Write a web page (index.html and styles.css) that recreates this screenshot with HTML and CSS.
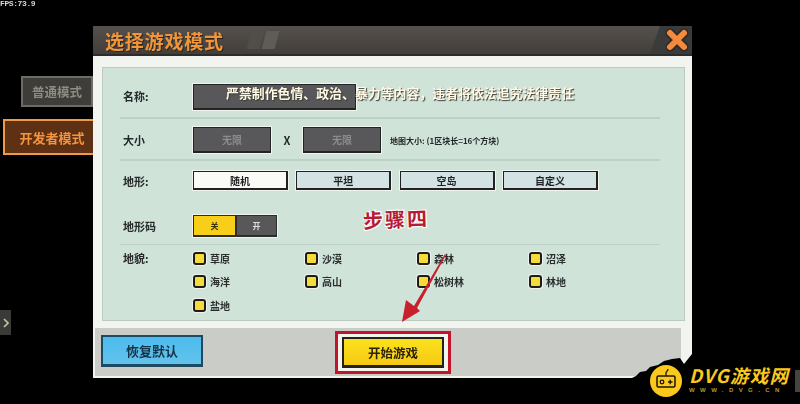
FILE: index.html
```html
<!doctype html>
<html>
<head>
<meta charset="utf-8">
<title>选择游戏模式</title>
<link rel="stylesheet" href="styles.css">
</head>

<body>
<div class="fps">FPS:73.9</div>

<div class="screen">
	<!--左侧模式-->
	<div class="side">
		<div class="tab tab-normal">普通模式</div>
		<div class="tab tab-dev">开发者模式</div>
		<div class="handle"><svg width="6" height="10" viewBox="0 0 6 10"><path d="M1 1l4 4-4 4" fill="none" stroke="#c9c2a8" stroke-width="1.6"/></svg></div>
	</div>

	<!--弹窗-->
	<div class="dialog">
		<div class="head">
			<div class="title">选择游戏模式</div>
			<div class="deco"><i></i><i></i></div>
			<div class="close">
				<svg width="24" height="24" viewBox="0 0 24 24">
					<path d="M5 5l14 14M19 5L5 19" stroke="#2d2a28" stroke-width="9" stroke-linecap="round"/>
					<path d="M5 5l14 14M19 5L5 19" stroke="#f58a3c" stroke-width="6" stroke-linecap="round"/>
				</svg>
			</div>
		</div>

		<div class="panel">
			<div class="row row-name">
				<div class="label">名称:</div>
				<div class="field field-name"></div>
			</div>
			<div class="row row-size">
				<div class="label">大小</div>
				<div class="field">无限</div>
				<div class="times">X</div>
				<div class="field">无限</div>
				<div class="hint">地图大小: (1区块长=16个方块)</div>
			</div>
			<div class="row row-terrain">
				<div class="label">地形:</div>
				<div class="opts">
					<div class="opt on">随机</div>
					<div class="opt">平坦</div>
					<div class="opt">空岛</div>
					<div class="opt">自定义</div>
				</div>
			</div>
			<div class="row row-code">
				<div class="label">地形码</div>
				<div class="toggle">
					<div class="tg-off">关</div>
					<div class="tg-on">开</div>
				</div>
			</div>
			<div class="row row-biome">
				<div class="label">地貌:</div>
				<div class="biomes">
					<div class="biome"><span class="check"></span>草原</div>
					<div class="biome"><span class="check"></span>沙漠</div>
					<div class="biome"><span class="check"></span>森林</div>
					<div class="biome"><span class="check"></span>沼泽</div>
					<div class="biome"><span class="check"></span>海洋</div>
					<div class="biome"><span class="check"></span>高山</div>
					<div class="biome"><span class="check"></span>松树林</div>
					<div class="biome"><span class="check"></span>林地</div>
					<div class="biome"><span class="check"></span>盐地</div>
				</div>
			</div>
		</div>

		<div class="foot">
			<div class="btn-reset">恢复默认</div>
			<div class="btn-start-wrap">
				<div class="btn-start">开始游戏</div>
			</div>
		</div>
	</div>
</div>

<!--盖在上面的标注-->
<div class="warn">严禁制作色情、政治、暴力等内容，违者将依法追究法律责任</div>
<div class="step">步骤四</div>
<svg class="arrow" width="60" height="80" viewBox="0 0 60 80">
	<path d="M46 8L15 60 7 54 3 76 21 65 18 62 47 9z" fill="#c8202c"/>
</svg>

<!--水印-->
<svg class="tear" width="70" height="54" viewBox="0 0 70 54"><path d="M4 28L8 26 12 22 18 21 22 17 30 15 36 11 44 9 52 8 56 14 60 9 64 4 70 4 70 54 4 54z" fill="#000"/></svg>
<div class="corner"></div>
<div class="logo">
	<svg class="logo-icon" width="32" height="32" viewBox="0 0 32 32">
		<circle cx="16" cy="16" r="16" fill="#fbc81e"/>
		<path d="M16 11V8c0-1.500 2-1.500 2-4" fill="none" stroke="#1c1605" stroke-width="1.300"/>
		<rect x="7" y="11" width="18" height="11" rx="1.500" fill="none" stroke="#1c1605" stroke-width="1.500"/>
		<circle cx="12" cy="17" r="1.800" fill="none" stroke="#1c1605" stroke-width="1.300"/>
		<path d="M18 17h4.500M20.200 14.800v4.500" stroke="#1c1605" stroke-width="1.300"/>
	</svg>
	<div class="logo-text">
		<div class="logo-name">DVG游戏网</div>
		<div class="logo-url">WWW.DVG.CN</div>
	</div>
</div>
</body>
</html>
```
FILE: styles.css
```css
* {
	box-sizing: border-box;
}
html, body {
	margin: 0;
	height: 100%;
	overflow: hidden;
	background: #000;
	font-family: "Noto Sans CJK SC", "Liberation Sans", sans-serif;
}
body {
	position: relative;
	width: 800px;
	height: 404px;
}

.fps {
	position: absolute;
	left: 0;
	top: -1px;
	color: #d8d8d8;
	font: bold 8px/9px "Liberation Mono", monospace;
	letter-spacing: -.4px;
	filter: blur(.3px);
}

.screen {
	display: flex;
	padding-top: 26px;
	filter: blur(.35px);
}

/* 左侧模式 */
.side {
	width: 93px;
	display: flex;
	flex-direction: column;
	align-items: flex-end;
	padding-top: 50px;
}
.tab {
	display: flex;
	align-items: center;
	justify-content: center;
	font-weight: bold;
}
.tab-normal {
	width: 72px;
	height: 31px;
	background: #3f3d39;
	border: 2px solid #6d6b64;
	color: #8e8c82;
	font-size: 12.500px;
}
.tab-dev {
	width: 90px;
	height: 36px;
	margin-top: 12px;
	padding-left: 6px;
	background: #5e3014;
	border: 2px solid #f09a45;
	border-right: 0;
	color: #f49440;
	font-size: 13px;
}
.handle {
	align-self: flex-start;
	width: 11px;
	height: 25px;
	margin-top: 155px;
	background: #3a3a38;
	display: flex;
	align-items: center;
	justify-content: center;
}

/* 弹窗 */
.dialog {
	width: 599px;
	height: 352px;
	background: #f1f4ef;
	display: flex;
	flex-direction: column;
}
.head {
	height: 30px;
	background: linear-gradient(#55504b, #423e39);
	border-bottom: 2px solid #2e2b28;
	display: flex;
	align-items: center;
	padding-left: 12px;
	position: relative;
}
.title {
	color: #f0953a;
	font-size: 19px;
	font-weight: bold;
	letter-spacing: .8px;
	text-shadow: 1px 1px 0 #2a2622;
}
.deco {
	display: flex;
	gap: 2px;
	margin-left: 25px;
}
.deco i {
	width: 13px;
	height: 18px;
	background: #5f5b56;
	transform: skewX(-15deg);
}
.deco i:first-child {
	background: #514d48;
}
.close {
	margin-left: auto;
	width: 42px;
	height: 28px;
	background: #3b3b3b;
	clip-path: polygon(10px 0, 100% 0, 100% 100%, 0 100%);
	display: flex;
	align-items: center;
	justify-content: flex-end;
	padding-right: 3px;
}

.panel {
	margin: 11px 7px 0 9px;
	height: 254px;
	background: #cfe3d9;
	border: 1px solid #bccabf;
	padding: 16px 24px 0 17px;
	display: flex;
	flex-direction: column;
}
.row {
	display: flex;
	flex-shrink: 0;
	align-items: center;
	padding-left: 3px;
	border-bottom: 2px solid #bdd0c5;
}
.label {
	width: 70px;
	color: #26282a;
	font-size: 11px;
	font-weight: bold;
}
.field {
	width: 78px;
	height: 26px;
	background: #58585a;
	border: 1px solid #232323;
	border-bottom-width: 2px;
	box-shadow: 0 0 0 1px #f0f5f0;
	color: #8c8c8c;
	font-size: 10px;
	font-weight: bold;
	display: flex;
	align-items: center;
	justify-content: center;
}
.field-name {
	width: 163px;
}
.row-name {
	height: 35px;
	padding-bottom: 7px;
}
.row-name .label {
	margin-top: -2px;
}
.row-size {
	height: 42px;
	padding-top: 7px;
	padding-bottom: 5px;
}
.times {
	width: 32px;
	text-align: center;
	color: #26282a;
	font-size: 11px;
	font-weight: bold;
}
.hint {
	margin-left: 9px;
	color: #25282a;
	font-size: 8px;
	font-weight: bold;
	white-space: nowrap;
}
.row-terrain {
	height: 29px;
	padding-top: 10px;
	border-bottom: 0;
}
.opts {
	display: flex;
	gap: 8.300px;
}
.opt {
	width: 95px;
	height: 19px;
	background: #d3e2e2;
	border: 1px solid #222;
	border-bottom-width: 2px;
	border-right-width: 2px;
	box-shadow: 0 0 0 1px #f0f5f0;
	color: #1e2022;
	font-size: 10px;
	font-weight: bold;
	display: flex;
	align-items: center;
	justify-content: center;
}
.opt.on {
	background: #fafaf6;
}
.row-code {
	height: 55px;
	padding-top: 25px;
	padding-bottom: 7px;
	border-bottom-width: 1px;
}
.toggle {
	display: flex;
	width: 84px;
	height: 22px;
	box-shadow: 0 0 0 1px #f0f5f0;
	font-size: 8px;
	font-weight: bold;
}
.tg-off, .tg-on {
	display: flex;
	align-items: center;
	justify-content: center;
	border: 1px solid #2c2c2c;
	border-bottom-width: 2px;
}
.tg-off {
	width: 43px;
	background: #f8cf18;
	color: #3a3008;
}
.tg-on {
	flex: 1;
	background: #58585a;
	color: #ddd;
}
.row-biome {
	border-bottom: 0;
	align-items: flex-start;
	padding-top: 5px;
}
.row-biome .label {
	line-height: 16px;
}
.biomes {
	display: grid;
	grid-template-columns: repeat(4, 112px);
	grid-auto-rows: 23.500px;
}
.biome {
	display: flex;
	align-items: center;
	gap: 4px;
	height: 16px;
	color: #2a2c2d;
	font-size: 10px;
	font-weight: bold;
}
.check {
	width: 13px;
	height: 13px;
	background: #f5dc3a;
	border: 2px solid #1d1d1a;
	border-radius: 3px;
	box-shadow: 0 0 0 1px #eef3ee;
}

.foot {
	flex: 1;
	margin: 7px 11px 2px 2px;
	background: #c9ccc7;
	display: flex;
	align-items: flex-start;
}
.btn-reset {
	width: 102px;
	height: 32px;
	margin: 7px 0 0 6px;
	background: linear-gradient(#4dbbee, #62c3ec);
	border: 2px solid #1d4a60;
	border-bottom-width: 3px;
	color: #123246;
	font-size: 13px;
	font-weight: bold;
	display: flex;
	align-items: center;
	justify-content: center;
}
.btn-start-wrap {
	margin: 3px 0 0 132px;
	width: 116px;
	height: 43px;
	border: 3px solid #c2142a;
	padding: 3px 4px;
	background: #f2f4ee;
}
.btn-start {
	height: 31px;
	background: linear-gradient(#fbe21c, #f6c914);
	border: 2px solid #23221a;
	border-bottom-width: 3px;
	color: #2a2206;
	font-size: 12.500px;
	font-weight: bold;
	display: flex;
	align-items: center;
	justify-content: center;
}

/* 标注 */
.warn {
	position: absolute;
	left: 226px;
	top: 84px;
	color: #fff9e6;
	font-size: 12.900px;
	font-weight: bold;
	line-height: 18px;
	white-space: nowrap;
	text-shadow: 1px 1px 1px #3c3a30;
	filter: blur(.3px);
}
.step {
	position: absolute;
	left: 363px;
	top: 206px;
	color: #b51c34;
	font-size: 20px;
	line-height: 26px;
	font-weight: bold;
	letter-spacing: 2px;
	white-space: nowrap;
	text-shadow: 1px 1px 0 #fff, -1px 1px 0 #fff, 1px -1px 0 #fff;
	transform: rotate(-2deg);
}
.arrow {
	position: absolute;
	left: 399px;
	top: 246px;
}

/* 水印 */
.tear {
	position: absolute;
	left: 628px;
	top: 350px;
}
.corner {
	position: absolute;
	left: 795px;
	top: 370px;
	width: 5px;
	height: 22px;
	background: #45453f;
}
.logo {
	position: absolute;
	left: 650px;
	top: 365px;
	display: flex;
	gap: 7px;
	align-items: flex-start;
}
.logo-name {
	color: #fbc81e;
	font: italic bold 18.500px/21px "Noto Sans CJK SC", sans-serif;
	letter-spacing: 1.200px;
	white-space: nowrap;
}
.logo-url {
	color: #b89a30;
	font: bold 6px/9px "Liberation Sans", sans-serif;
	letter-spacing: 5.400px;
	white-space: nowrap;
}
```
